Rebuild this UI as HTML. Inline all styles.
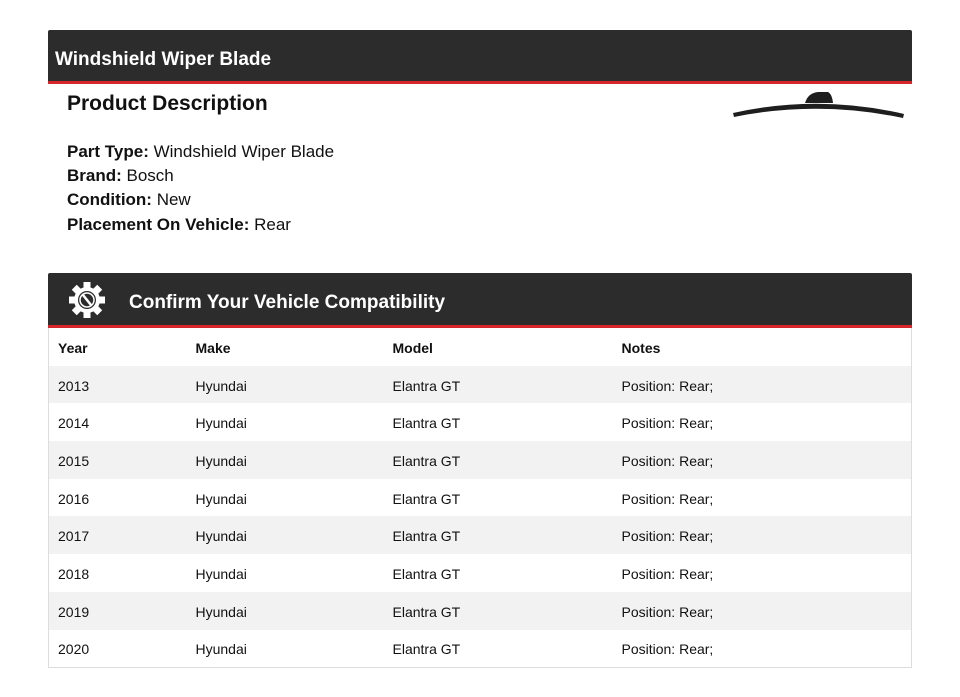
<!DOCTYPE html>
<html><head><style>
*{margin:0;padding:0;box-sizing:border-box}
body{width:960px;height:697px;background:#fff;font-family:"Liberation Sans",Arial,sans-serif;color:#111;position:relative;overflow:hidden}
.bar{position:absolute;left:48px;width:864px;background:#2d2c2c;border-bottom:3px solid #d6262b;color:#fff;font-weight:bold;border-radius:2px 2px 0 0}
#b1{top:30px;height:54px}
#b1 span{position:absolute;left:7px;top:19px;font-size:19px}
#b2{top:273px;height:55px}
#b2 span{position:absolute;left:81px;top:19px;font-size:19px}
h2{position:absolute;left:67px;top:92px;font-size:21px;font-weight:bold}
.d{position:absolute;left:67px;font-size:17px}
.d b{font-weight:bold}
table{position:absolute;left:48px;top:328px;width:864px;border-collapse:collapse;border:1px solid #ddd;border-top:none;font-size:14px}
td,th{height:37.7px;text-align:left;padding-left:9px;font-weight:normal;padding-top:2px}
th{font-weight:bold}
tr:nth-child(even){background:#f2f2f2}
</style></head><body>
<div class="bar" id="b1"><span>Windshield Wiper Blade</span></div>
<h2>Product Description</h2>
<div class="d" style="top:142px"><b>Part Type:</b> Windshield Wiper Blade</div>
<div class="d" style="top:166px"><b>Brand:</b> Bosch</div>
<div class="d" style="top:190px"><b>Condition:</b> New</div>
<div class="d" style="top:215px"><b>Placement On Vehicle:</b> Rear</div>
<svg style="position:absolute;left:730px;top:88px" width="180" height="36" viewBox="0 0 180 36">
<path d="M3 25 Q88 6 174 26 L173 30 Q88 12 4 29 Z" fill="#1e1e1e"/>
<path d="M75 15 Q78 5 88 4 L98 4 Q102 6 103 15 Z" fill="#1e1e1e"/>
</svg>
<div class="bar" id="b2">
<svg style="position:absolute;left:20px;top:8px" width="38" height="38" viewBox="0 0 38 38">
<g fill="#fff" transform="translate(19 19)">
<circle r="13"/>
<g id="t"><rect x="-3.5" y="-18" width="7" height="7"/></g>
<use href="#t" transform="rotate(45)"/><use href="#t" transform="rotate(90)"/><use href="#t" transform="rotate(135)"/><use href="#t" transform="rotate(180)"/><use href="#t" transform="rotate(225)"/><use href="#t" transform="rotate(270)"/><use href="#t" transform="rotate(315)"/>
<circle r="9" fill="#2d2c2c"/>
<circle r="7" fill="none" stroke="#fff" stroke-width="1.5"/>
<path d="M-4 -5 L4 5" stroke="#fff" stroke-width="2.5"/>
</g></svg>
<span>Confirm Your Vehicle Compatibility</span></div>
<table>
<tr><th style="width:138px">Year</th><th style="width:197px">Make</th><th style="width:229px">Model</th><th>Notes</th></tr>
<tr><td>2013</td><td>Hyundai</td><td>Elantra GT</td><td>Position: Rear;</td></tr>
<tr><td>2014</td><td>Hyundai</td><td>Elantra GT</td><td>Position: Rear;</td></tr>
<tr><td>2015</td><td>Hyundai</td><td>Elantra GT</td><td>Position: Rear;</td></tr>
<tr><td>2016</td><td>Hyundai</td><td>Elantra GT</td><td>Position: Rear;</td></tr>
<tr><td>2017</td><td>Hyundai</td><td>Elantra GT</td><td>Position: Rear;</td></tr>
<tr><td>2018</td><td>Hyundai</td><td>Elantra GT</td><td>Position: Rear;</td></tr>
<tr><td>2019</td><td>Hyundai</td><td>Elantra GT</td><td>Position: Rear;</td></tr>
<tr><td>2020</td><td>Hyundai</td><td>Elantra GT</td><td>Position: Rear;</td></tr>
</table>
</body></html>
